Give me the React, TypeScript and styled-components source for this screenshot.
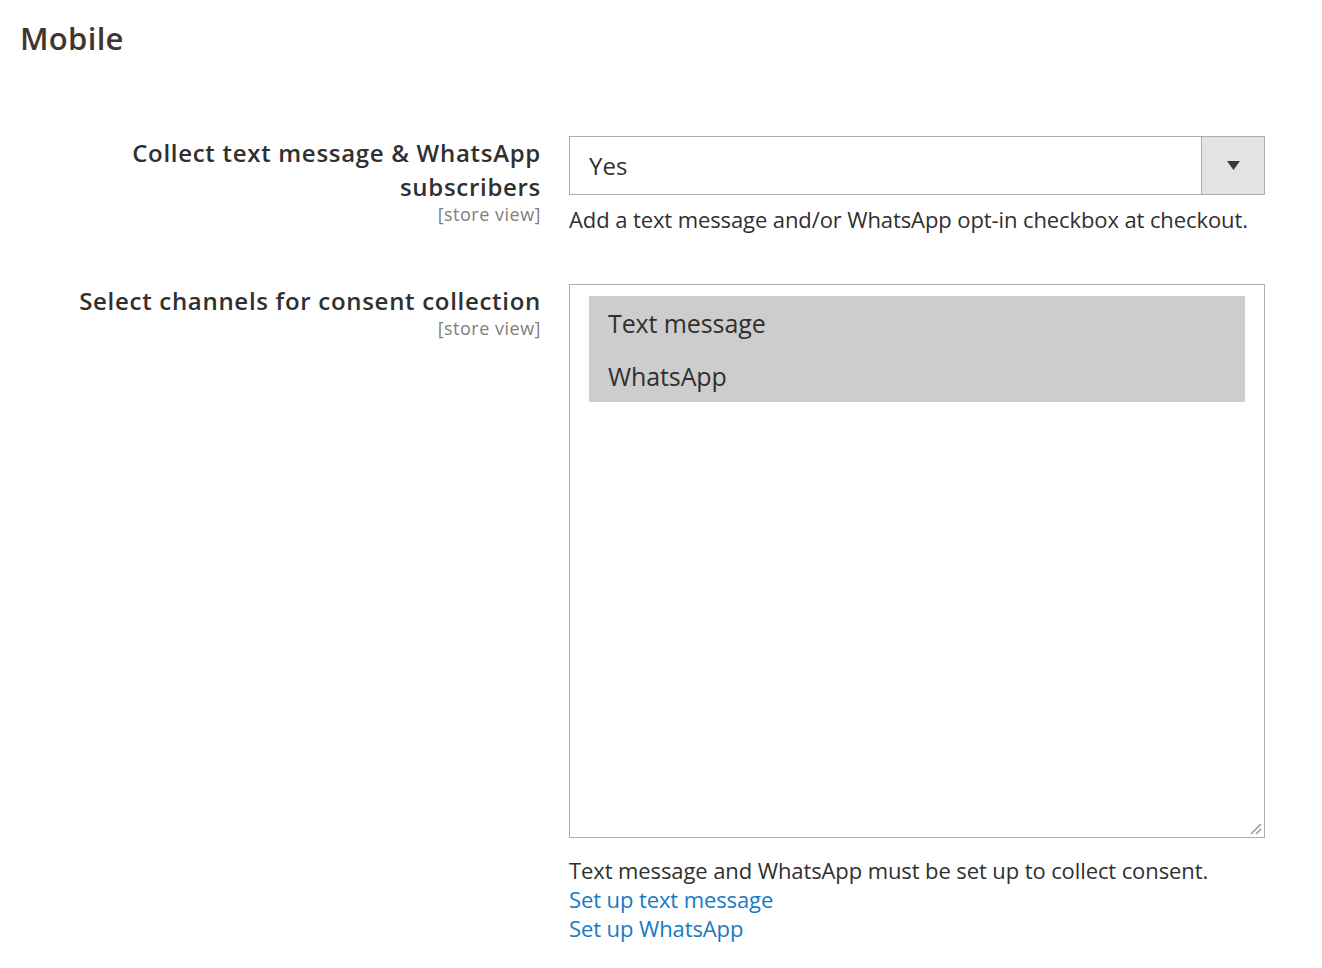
import React from "react";
import styled, { createGlobalStyle } from "styled-components";

const Global = createGlobalStyle`
  body { margin: 0; background: #fff; font-family: "Open Sans", "Noto Sans", sans-serif; color: #303030; }
`;

const Page = styled.div`
  padding: 14px 0 0 20px;
`;
const Title = styled.h1`
  margin: 0;
  font-size: 31px;
  font-weight: 600;
  color: #41362f;
  line-height: 48px;
  letter-spacing: 0.3px;
`;
const Form = styled.div`
  margin-top: 74px;
  display: grid;
  grid-template-columns: 521px 696px;
  column-gap: 28px;
  row-gap: 50px;
`;
const Label = styled.div`
  text-align: right;
  font-size: 24px;
  font-weight: 600;
  line-height: 34px;
  color: #303030;
  letter-spacing: 0.7px;
`;
const Scope = styled.div`
  font-size: 18px;
  font-weight: 400;
  color: #808080;
  line-height: 20px;
  margin-top: 0;
  letter-spacing: 0.5px;
`;
const Field = styled.div`
  display: flex;
  flex-direction: column;
`;
const Select = styled.div`
  display: flex;
  height: 59px;
  border: 1px solid #adadad;
  box-sizing: border-box;
`;
const SelectValue = styled.div`
  flex: 1;
  display: flex;
  align-items: center;
  padding-left: 19px;
  font-size: 24px;
  color: #303030;
`;
const Arrow = styled.div`
  width: 62px;
  background: #e3e3e3;
  border-left: 1px solid #adadad;
  display: flex;
  align-items: center;
  justify-content: center;
`;
const Note = styled.div<{ $mt?: number }>`
  font-size: 22px;
  line-height: 29px;
  color: #303030;
  letter-spacing: -0.1px;
  margin-top: ${(p) => p.$mt ?? 0}px;
`;
const Link = styled.a`
  display: block;
  font-size: 22px;
  line-height: 29px;
  color: #1979c3;
  text-decoration: none;
  letter-spacing: -0.1px;
`;
const ListBox = styled.div`
  position: relative;
  height: 554px;
  border: 1px solid #adadad;
  box-sizing: border-box;
  padding: 11px 19px;
`;
const Option = styled.div`
  background: #cdcdcd;
  height: 53px;
  display: flex;
  align-items: center;
  padding-left: 19px;
  font-size: 25px;
  color: #303030;
  letter-spacing: -0.1px;
`;
const Grip = styled.svg`
  position: absolute;
  right: 2px;
  bottom: 2px;
`;

export default function App() {
  return (
    <Page>
      <Global />
      <Title>Mobile</Title>
      <Form>
        <Label>
          Collect text message &amp; WhatsApp
          <br />
          subscribers
          <Scope>[store view]</Scope>
        </Label>
        <Field>
          <Select>
            <SelectValue>Yes</SelectValue>
            <Arrow>
              <svg width="13" height="9" viewBox="0 0 13 9">
                <path d="M0 0h13L6.5 9z" fill="#41362f" />
              </svg>
            </Arrow>
          </Select>
          <Note $mt={10}>Add a text message and/or WhatsApp opt-in checkbox at checkout.</Note>
        </Field>
        <Label>
          Select channels for consent collection
          <Scope>[store view]</Scope>
        </Label>
        <Field>
          <ListBox>
            <Option>Text message</Option>
            <Option>WhatsApp</Option>
            <Grip width="14" height="14" viewBox="0 0 14 14">
              <path d="M13 3L3 13M13 8L8 13" stroke="#999" strokeWidth="1.5" />
            </Grip>
          </ListBox>
          <Note $mt={18}>Text message and WhatsApp must be set up to collect consent.</Note>
          <Link href="#">Set up text message</Link>
          <Link href="#">Set up WhatsApp</Link>
        </Field>
      </Form>
    </Page>
  );
}
